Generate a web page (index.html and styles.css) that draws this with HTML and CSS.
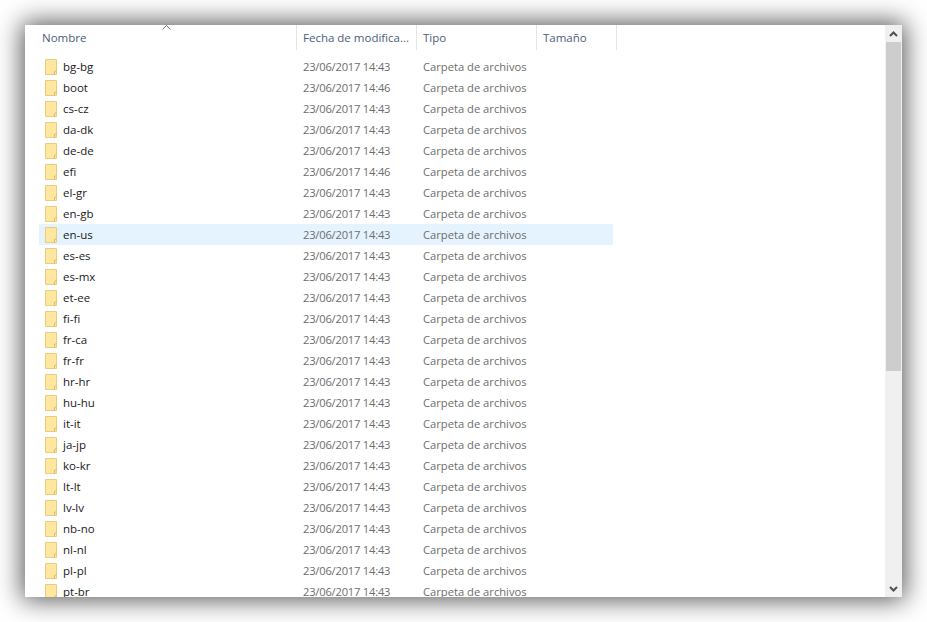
FILE: index.html
```html
<!DOCTYPE html>
<html lang="es">
<head>
<meta charset="utf-8">
<title>Carpeta</title>
<link rel="stylesheet" href="styles.css">
</head>
<body>
<svg class="defs" width="0" height="0" aria-hidden="true">
  <symbol id="folder" viewBox="0 0 12 16">
    <path d="M.5.500h11v15.000H.5z" fill="#ffe9a6" stroke="#e8cd7c"/>
    <path d="M1 1h10v11l-1.500 .8V15H1z" fill="#ffe7a0"/>
    <path d="M9.500 15.500v-3l2-1" fill="none" stroke="#dcb95c"/>
  </symbol>
</svg>
<main class="window">
  <div class="content">
    <div class="header">
      <span class="sort-arrow"><svg width="9" height="5" viewBox="0 0 9 5"><path d="M.5 4.500l4-4 4 4" fill="none" stroke="#7b7b7b"/></svg></span>
      <div class="col col-name">Nombre</div>
      <div class="col col-date">Fecha de modifica...</div>
      <div class="col col-type">Tipo</div>
      <div class="col col-size">Tamaño</div>
    </div>
    <div class="rows" id="rows">
      <div class="row"><span class="name"><svg class="icon"><use href="#folder"/></svg>bg-bg</span><span class="date">23/06/2017 14:43</span><span class="type">Carpeta de archivos</span></div>
      <div class="row"><span class="name"><svg class="icon"><use href="#folder"/></svg>boot</span><span class="date">23/06/2017 14:46</span><span class="type">Carpeta de archivos</span></div>
      <div class="row"><span class="name"><svg class="icon"><use href="#folder"/></svg>cs-cz</span><span class="date">23/06/2017 14:43</span><span class="type">Carpeta de archivos</span></div>
      <div class="row"><span class="name"><svg class="icon"><use href="#folder"/></svg>da-dk</span><span class="date">23/06/2017 14:43</span><span class="type">Carpeta de archivos</span></div>
      <div class="row"><span class="name"><svg class="icon"><use href="#folder"/></svg>de-de</span><span class="date">23/06/2017 14:43</span><span class="type">Carpeta de archivos</span></div>
      <div class="row"><span class="name"><svg class="icon"><use href="#folder"/></svg>efi</span><span class="date">23/06/2017 14:46</span><span class="type">Carpeta de archivos</span></div>
      <div class="row"><span class="name"><svg class="icon"><use href="#folder"/></svg>el-gr</span><span class="date">23/06/2017 14:43</span><span class="type">Carpeta de archivos</span></div>
      <div class="row"><span class="name"><svg class="icon"><use href="#folder"/></svg>en-gb</span><span class="date">23/06/2017 14:43</span><span class="type">Carpeta de archivos</span></div>
      <div class="row selected"><span class="name"><svg class="icon"><use href="#folder"/></svg>en-us</span><span class="date">23/06/2017 14:43</span><span class="type">Carpeta de archivos</span></div>
      <div class="row"><span class="name"><svg class="icon"><use href="#folder"/></svg>es-es</span><span class="date">23/06/2017 14:43</span><span class="type">Carpeta de archivos</span></div>
      <div class="row"><span class="name"><svg class="icon"><use href="#folder"/></svg>es-mx</span><span class="date">23/06/2017 14:43</span><span class="type">Carpeta de archivos</span></div>
      <div class="row"><span class="name"><svg class="icon"><use href="#folder"/></svg>et-ee</span><span class="date">23/06/2017 14:43</span><span class="type">Carpeta de archivos</span></div>
      <div class="row"><span class="name"><svg class="icon"><use href="#folder"/></svg>fi-fi</span><span class="date">23/06/2017 14:43</span><span class="type">Carpeta de archivos</span></div>
      <div class="row"><span class="name"><svg class="icon"><use href="#folder"/></svg>fr-ca</span><span class="date">23/06/2017 14:43</span><span class="type">Carpeta de archivos</span></div>
      <div class="row"><span class="name"><svg class="icon"><use href="#folder"/></svg>fr-fr</span><span class="date">23/06/2017 14:43</span><span class="type">Carpeta de archivos</span></div>
      <div class="row"><span class="name"><svg class="icon"><use href="#folder"/></svg>hr-hr</span><span class="date">23/06/2017 14:43</span><span class="type">Carpeta de archivos</span></div>
      <div class="row"><span class="name"><svg class="icon"><use href="#folder"/></svg>hu-hu</span><span class="date">23/06/2017 14:43</span><span class="type">Carpeta de archivos</span></div>
      <div class="row"><span class="name"><svg class="icon"><use href="#folder"/></svg>it-it</span><span class="date">23/06/2017 14:43</span><span class="type">Carpeta de archivos</span></div>
      <div class="row"><span class="name"><svg class="icon"><use href="#folder"/></svg>ja-jp</span><span class="date">23/06/2017 14:43</span><span class="type">Carpeta de archivos</span></div>
      <div class="row"><span class="name"><svg class="icon"><use href="#folder"/></svg>ko-kr</span><span class="date">23/06/2017 14:43</span><span class="type">Carpeta de archivos</span></div>
      <div class="row"><span class="name"><svg class="icon"><use href="#folder"/></svg>lt-lt</span><span class="date">23/06/2017 14:43</span><span class="type">Carpeta de archivos</span></div>
      <div class="row"><span class="name"><svg class="icon"><use href="#folder"/></svg>lv-lv</span><span class="date">23/06/2017 14:43</span><span class="type">Carpeta de archivos</span></div>
      <div class="row"><span class="name"><svg class="icon"><use href="#folder"/></svg>nb-no</span><span class="date">23/06/2017 14:43</span><span class="type">Carpeta de archivos</span></div>
      <div class="row"><span class="name"><svg class="icon"><use href="#folder"/></svg>nl-nl</span><span class="date">23/06/2017 14:43</span><span class="type">Carpeta de archivos</span></div>
      <div class="row"><span class="name"><svg class="icon"><use href="#folder"/></svg>pl-pl</span><span class="date">23/06/2017 14:43</span><span class="type">Carpeta de archivos</span></div>
      <div class="row"><span class="name"><svg class="icon"><use href="#folder"/></svg>pt-br</span><span class="date">23/06/2017 14:43</span><span class="type">Carpeta de archivos</span></div>
    </div>
  </div>
  <div class="scrollbar">
    <div class="arrow"><svg width="9" height="6" viewBox="0 0 9 6"><path d="M1 5l3.500-3.500L8 5" fill="none" stroke="#505050" stroke-width="2"/></svg></div>
    <div class="track"><div class="thumb"></div></div>
    <div class="arrow"><svg width="9" height="6" viewBox="0 0 9 6"><path d="M1 1l3.500 3.500L8 1" fill="none" stroke="#505050" stroke-width="2"/></svg></div>
  </div>
</main>
</body>
</html>
```
FILE: styles.css
```css
* { box-sizing: border-box; }
html, body { margin: 0; height: 100%; }
body {
  background: #fff;
  padding: 25px;
  overflow: hidden;
  font-family: "Open Sans", "Noto Sans", sans-serif;
  font-size: 11.5px;
}
.defs { position: absolute; }
.window {
  display: flex;
  width: 877px;
  height: 572px;
  background: #fff;
  box-shadow: 0 0 24px 3px rgba(0, 0, 0, 0.66);
}
.content { flex: 1; min-width: 0; overflow: hidden; }
.header {
  position: relative;
  display: grid;
  grid-template-columns: 272px 120px 120px 80px;
  height: 25px;
  color: #4c607a;
}
.sort-arrow {
  position: absolute;
  left: 137px;
  top: 0;
  line-height: 0;
}
.col {
  display: flex;
  align-items: center;
  padding: 0 6px;
  border-right: 1px solid #e5e5e5;
  white-space: nowrap;
  overflow: hidden;
}
.col-name { padding-left: 17px; }
.rows { padding: 6px 0 0 14px; }
.row {
  display: grid;
  grid-template-columns: 258px 120px 120px;
  width: 574px;
  height: 21px;
  align-items: center;
  color: #6d6d6d;
  font-size: 11.2px;
}
.selected { background: #e5f3ff; }
.name {
  display: flex;
  align-items: center;
  gap: 6px;
  padding-left: 6px;
  color: #1a1a1a;
  font-size: 11.5px;
}
.icon { width: 12px; height: 16px; flex: none; }
.date, .type { padding-left: 6px; white-space: nowrap; }
.date { letter-spacing: -0.22px; }
.scrollbar {
  flex: none;
  width: 17px;
  display: flex;
  flex-direction: column;
  background: #f0f0f0;
}
.arrow {
  height: 17px;
  display: flex;
  align-items: center;
  justify-content: center;
  flex: none;
}
.track { flex: 1; }
.thumb { height: 329px; margin: 0 1px; background: #cdcdcd; }
```
